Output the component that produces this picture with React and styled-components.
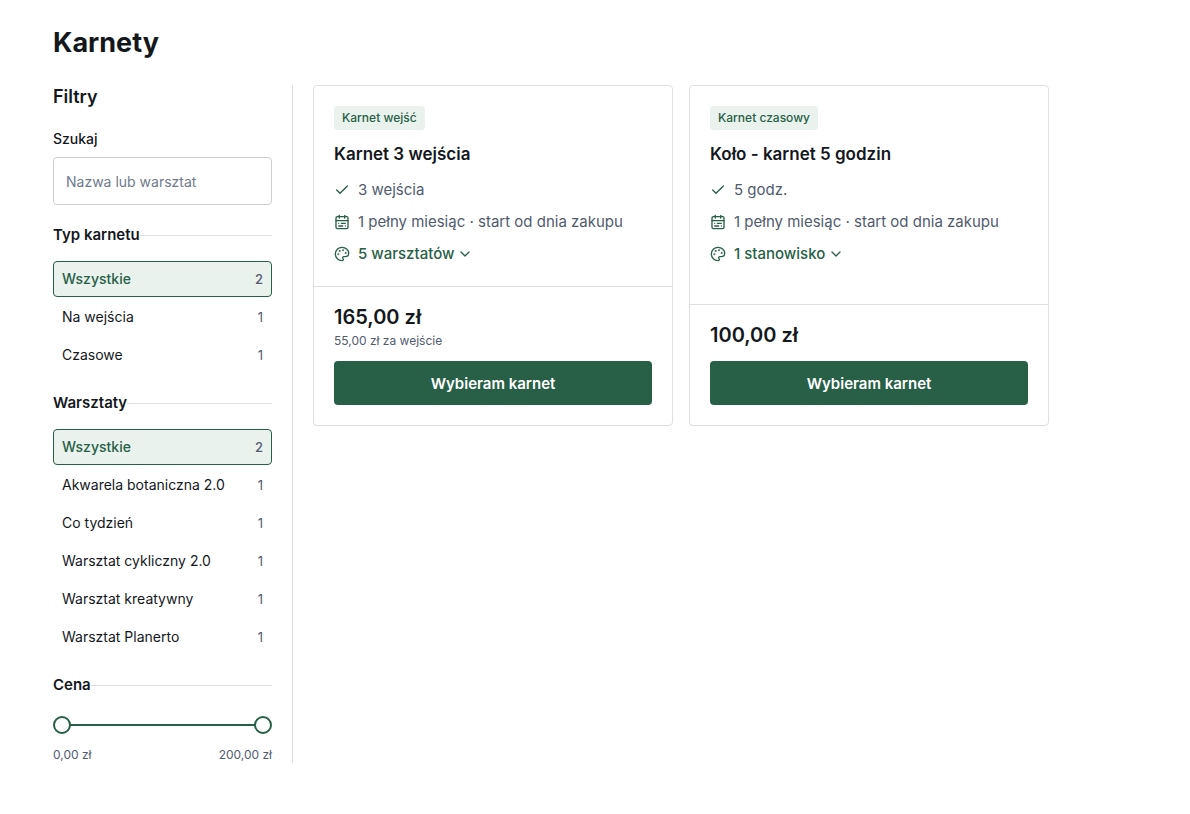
import React, { useState } from 'react'
import styled, { createGlobalStyle } from 'styled-components'
import { CalendarRange, Check, ChevronDown, Palette } from 'lucide-react'

const types = [
    { name: 'Wszystkie', count: 2 },
    { name: 'Na wejścia', count: 1 },
    { name: 'Czasowe', count: 1 },
]

const workshops = [
    { name: 'Wszystkie', count: 2 },
    { name: 'Akwarela botaniczna 2.0', count: 1 },
    { name: 'Co tydzień', count: 1 },
    { name: 'Warsztat cykliczny 2.0', count: 1 },
    { name: 'Warsztat kreatywny', count: 1 },
    { name: 'Warsztat Planerto', count: 1 },
]

const passes = [
    {
        badge: 'Karnet wejść',
        name: 'Karnet 3 wejścia',
        amount: '3 wejścia',
        validity: '1 pełny miesiąc · start od dnia zakupu',
        places: '5 warsztatów',
        price: '165,00 zł',
        unitPrice: '55,00 zł za wejście',
    },
    {
        badge: 'Karnet czasowy',
        name: 'Koło - karnet 5 godzin',
        amount: '5 godz.',
        validity: '1 pełny miesiąc · start od dnia zakupu',
        places: '1 stanowisko',
        price: '100,00 zł',
    },
]

const MAX_PRICE = 200

const formatPrice = (value) => `${value},00 zł`

const FilterGroup = ({ title, name, options }) => {
    const [selected, setSelected] = useState(options[0].name)

    return (
        <Group>
            <Legend>{title}</Legend>
            <Options>
                {options.map((option) => (
                    <Option key={option.name}>
                        <HiddenRadio
                            type="radio"
                            name={name}
                            value={option.name}
                            checked={selected === option.name}
                            onChange={() => setSelected(option.name)}
                        />
                        <span>{option.name}</span>
                        <Count>{option.count}</Count>
                    </Option>
                ))}
            </Options>
        </Group>
    )
}

const PriceFilter = () => {
    const [min, setMin] = useState(0)
    const [max, setMax] = useState(MAX_PRICE)

    return (
        <Group>
            <Legend>Cena</Legend>
            <Slider>
                <Track />
                <Range
                    type="range"
                    aria-label="Cena od"
                    min="0"
                    max={MAX_PRICE}
                    value={min}
                    onChange={(e) =>
                        setMin(Math.min(Number(e.target.value), max))
                    }
                />
                <Range
                    type="range"
                    aria-label="Cena do"
                    min="0"
                    max={MAX_PRICE}
                    value={max}
                    onChange={(e) =>
                        setMax(Math.max(Number(e.target.value), min))
                    }
                />
            </Slider>
            <PriceLabels>
                <span>{formatPrice(min)}</span>
                <span>{formatPrice(max)}</span>
            </PriceLabels>
        </Group>
    )
}

const PassCard = ({ pass }) => (
    <Card>
        <CardBody>
            <Badge>{pass.badge}</Badge>
            <CardTitle>{pass.name}</CardTitle>
            <Details>
                <Detail>
                    <Check size={16} />
                    {pass.amount}
                </Detail>
                <Detail>
                    <CalendarRange size={16} />
                    {pass.validity}
                </Detail>
                <Detail>
                    <Palette size={16} />
                    <Toggle type="button" aria-expanded="false">
                        {pass.places}
                        <ChevronDown size={16} />
                    </Toggle>
                </Detail>
            </Details>
        </CardBody>
        <CardFooter>
            <Price>{pass.price}</Price>
            {pass.unitPrice && <UnitPrice>{pass.unitPrice}</UnitPrice>}
            <BuyButton type="button">Wybieram karnet</BuyButton>
        </CardFooter>
    </Card>
)

const App = () => {
    const [query, setQuery] = useState('')

    return (
        <>
            <GlobalStyle />
            <Page>
                <PageTitle>Karnety</PageTitle>
                <Layout>
                    <Sidebar>
                        <SidebarTitle>Filtry</SidebarTitle>
                        <Search>
                            <SearchLabel htmlFor="search">Szukaj</SearchLabel>
                            <SearchInput
                                id="search"
                                type="text"
                                placeholder="Nazwa lub warsztat"
                                value={query}
                                onChange={(e) => setQuery(e.target.value)}
                            />
                        </Search>
                        <FilterGroup
                            title="Typ karnetu"
                            name="type"
                            options={types}
                        />
                        <FilterGroup
                            title="Warsztaty"
                            name="workshop"
                            options={workshops}
                        />
                        <PriceFilter />
                    </Sidebar>
                    <Cards>
                        {passes.map((pass) => (
                            <PassCard key={pass.name} pass={pass} />
                        ))}
                    </Cards>
                </Layout>
            </Page>
        </>
    )
}

export default App

const GlobalStyle = createGlobalStyle`
    * {
        box-sizing: border-box;
    }

    body {
        margin: 0;
        background: #ffffff;
        color: #14181d;
        font-family: Inter, 'Liberation Sans', sans-serif;
        font-size: 14px;
        line-height: 20px;
    }

    button,
    input {
        font-family: inherit;
    }
`

const Page = styled.main`
    max-width: 1190px;
    margin: 0 auto;
    padding: 25px 53px 50px;
`

const PageTitle = styled.h1`
    margin: 0 0 24px;
    font-size: 27px;
    line-height: 36px;
    font-weight: 700;
`

const Layout = styled.div`
    display: flex;
    align-items: flex-start;
    gap: 20px;
`

const Sidebar = styled.aside`
    display: flex;
    flex-direction: column;
    gap: 18px;
    flex: 0 0 240px;
    padding-right: 20px;
    border-right: 1px solid #dfdfdf;
`

const SidebarTitle = styled.h2`
    margin: 0;
    font-size: 18px;
    line-height: 24px;
    font-weight: 600;
`

const Search = styled.div`
    display: flex;
    flex-direction: column;
    gap: 8px;
    padding-top: 2px;
`

const SearchLabel = styled.label`
    font-weight: 500;
`

const SearchInput = styled.input`
    width: 100%;
    height: 48px;
    padding: 0 12px;
    border: 1px solid #cfcfcf;
    border-radius: 4px;
    background: #ffffff;
    color: #14181d;
    font-size: 14px;

    &::placeholder {
        color: #6f7a8d;
        opacity: 1;
    }
`

const Group = styled.fieldset`
    min-width: 0;
    margin: 0;
    padding: 0;
    border: 0;
    border-top: 1px solid #dfdfdf;
`

const Legend = styled.legend`
    padding: 0;
    font-size: 15px;
    line-height: 24px;
    font-weight: 600;
`

const Options = styled.div`
    display: flex;
    flex-direction: column;
    gap: 2px;
    padding-top: 14px;
`

const Count = styled.span`
    color: #525b6e;
    font-size: 13px;
    font-weight: 400;
`

const Option = styled.label`
    position: relative;
    display: flex;
    align-items: center;
    justify-content: space-between;
    height: 36px;
    padding: 0 8px;
    border: 1px solid transparent;
    border-radius: 4px;
    cursor: pointer;

    &:has(input:checked) {
        border-color: #286047;
        background: #e9f2ed;
        color: #286047;
        font-weight: 500;
    }

    &:has(input:checked) ${Count} {
        font-weight: 500;
    }
`

const HiddenRadio = styled.input`
    position: absolute;
    inset: 0;
    margin: 0;
    opacity: 0;
    cursor: pointer;
`

const Slider = styled.div`
    display: grid;
    align-items: center;
    height: 18px;
    margin-top: 19px;
`

const Track = styled.div`
    grid-area: 1 / 1;
    height: 2px;
    margin: 0 9px;
    background: #286047;
`

const Range = styled.input`
    grid-area: 1 / 1;
    appearance: none;
    width: 100%;
    height: 18px;
    margin: 0;
    background: transparent;
    pointer-events: none;

    &::-webkit-slider-thumb {
        appearance: none;
        width: 18px;
        height: 18px;
        border: 2px solid #286047;
        border-radius: 50%;
        background: #ffffff;
        pointer-events: auto;
        cursor: pointer;
    }
`

const PriceLabels = styled.div`
    display: flex;
    justify-content: space-between;
    margin-top: 13px;
    color: #525b6e;
    font-size: 12px;
    line-height: 16px;
`

const Cards = styled.section`
    display: grid;
    grid-template-columns: repeat(auto-fill, minmax(280px, 360px));
    gap: 16px;
    flex: 1;
`

const Card = styled.article`
    display: flex;
    flex-direction: column;
    border: 1px solid #dfdfdf;
    border-radius: 4px;
`

const CardBody = styled.div`
    display: flex;
    flex: 1;
    flex-direction: column;
    align-items: flex-start;
    gap: 12px;
    padding: 20px;
`

const Badge = styled.span`
    padding: 0 8px;
    border-radius: 4px;
    background: #e9f2ed;
    color: #286047;
    font-size: 12px;
    line-height: 24px;
    font-weight: 500;
`

const CardTitle = styled.h3`
    margin: 0;
    font-size: 17px;
    line-height: 24px;
    font-weight: 600;
`

const Details = styled.ul`
    display: flex;
    flex-direction: column;
    gap: 8px;
    margin: 0;
    padding: 0;
    list-style: none;
`

const Detail = styled.li`
    display: flex;
    align-items: center;
    gap: 8px;
    color: #525b6e;
    font-size: 15px;
    line-height: 24px;

    svg {
        flex: none;
        color: #286047;
    }
`

const Toggle = styled.button`
    display: flex;
    align-items: center;
    gap: 3px;
    padding: 0;
    border: 0;
    background: none;
    color: #286047;
    font-size: 15px;
    line-height: 24px;
    font-weight: 500;
    cursor: pointer;
`

const CardFooter = styled.div`
    display: flex;
    flex-direction: column;
    padding: 16px 20px 20px;
    border-top: 1px solid #dfdfdf;
`

const Price = styled.strong`
    font-size: 20px;
    line-height: 28px;
    font-weight: 600;
`

const UnitPrice = styled.span`
    margin-top: 2px;
    color: #525b6e;
    font-size: 12px;
    line-height: 16px;
`

const BuyButton = styled.button`
    height: 44px;
    margin-top: 12px;
    border: 0;
    border-radius: 4px;
    background: #286047;
    color: #ffffff;
    font-size: 15px;
    font-weight: 600;
    cursor: pointer;
`
